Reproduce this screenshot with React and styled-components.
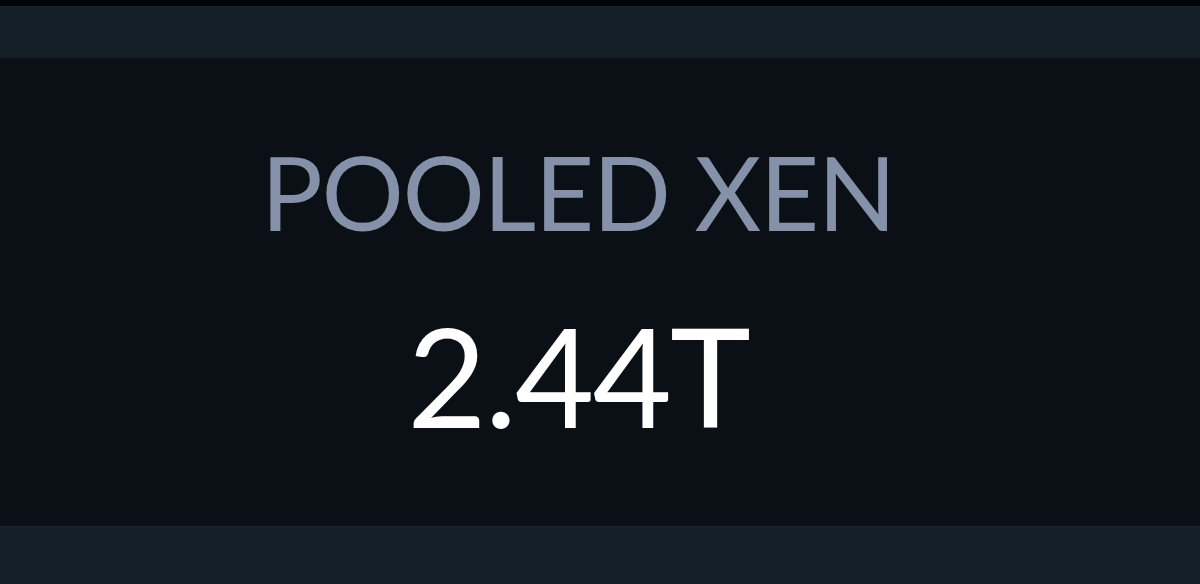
import React from 'react'
import styled, { createGlobalStyle } from 'styled-components'

const GlobalStyle = createGlobalStyle`
  html, body {
    margin: 0;
    padding: 0;
    background: #030405;
  }
  body {
    font-family: Lato, 'Liberation Sans', sans-serif;
  }
`

const Page = styled.div`
  width: 1200px;
  height: 584px;
  padding-top: 6px;
  box-sizing: border-box;
  display: flex;
  flex-direction: column;
  overflow: hidden;
`

const Band = styled.div`
  height: ${props => props.size}px;
  flex-shrink: 0;
  background: #141f27;
  border-top: 1px solid #1a252d;
  box-sizing: border-box;
`

const Panel = styled.section`
  height: 468px;
  flex-shrink: 0;
  background: #0b1017;
  display: flex;
  flex-direction: column;
  align-items: center;
  padding-right: 44px;
  box-sizing: border-box;
`

const Label = styled.h2`
  margin: 82px 0 0;
  font-size: 103px;
  font-weight: 400;
  line-height: 1;
  letter-spacing: -1.5px;
  color: #8491a9;
`

const Value = styled.div`
  margin-top: 64px;
  font-size: 137px;
  font-weight: 400;
  line-height: 1;
  letter-spacing: -2px;
  color: #ffffff;
`

const App = () => (
  <>
    <GlobalStyle />
    <Page>
      <Band size={52} />
      <Panel>
        <Label>POOLED XEN</Label>
        <Value>2.44T</Value>
      </Panel>
      <Band size={58} />
    </Page>
  </>
)

export default App
